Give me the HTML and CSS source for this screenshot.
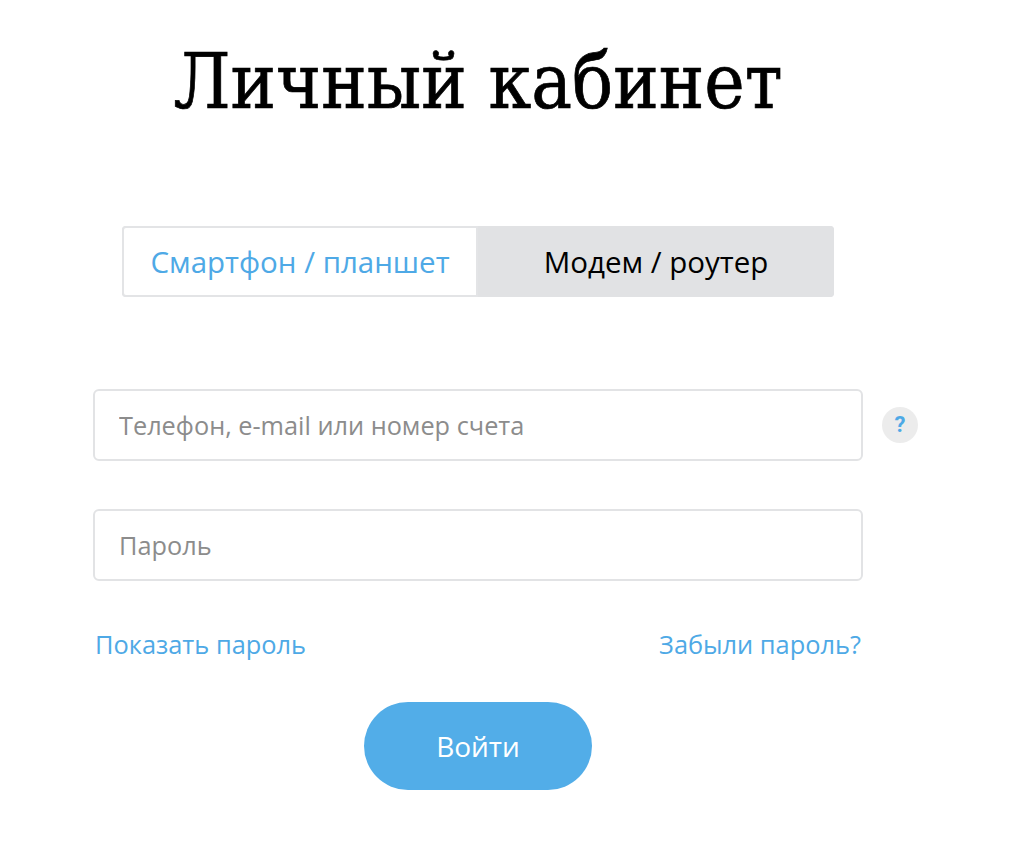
FILE: index.html
```html
<!DOCTYPE html>
<html lang="ru">
<head>
<meta charset="utf-8">
<title>Личный кабинет</title>
<link rel="stylesheet" href="styles.css">
</head>
<body>
<main class="page">
  <h1 class="title">Личный кабинет</h1>
  <div class="tabs">
    <button class="tab tab-active" type="button">Смартфон / планшет</button>
    <button class="tab tab-inactive" type="button">Модем / роутер</button>
  </div>
  <form class="form">
    <div class="field-row">
      <input class="field" type="text" placeholder="Телефон, e-mail или номер счета">
      <span class="help">?</span>
    </div>
    <div class="field-row">
      <input class="field" type="password" placeholder="Пароль">
    </div>
    <div class="links">
      <a class="link" href="#">Показать пароль</a>
      <a class="link" href="#">Забыли пароль?</a>
    </div>
    <div class="submit-row">
      <button class="submit" type="button">Войти</button>
    </div>
  </form>
</main>
</body>
</html>
```
FILE: styles.css
```css
html, body {
  margin: 0;
  padding: 0;
  background: #ffffff;
}
body {
  font-family: "Open Sans", "Noto Sans", sans-serif;
  color: #000;
}
.page {
  width: 770px;
  margin-left: 93px;
  display: flex;
  flex-direction: column;
  align-items: center;
}
.title {
  font-family: "DejaVu Serif Condensed", "DejaVu Serif", serif;
  font-stretch: condensed;
  font-weight: normal;
  font-size: 76px;
  line-height: 86px;
  margin: 39px 0 0 0;
  -webkit-text-stroke: 0.7px #000;
}
.tabs {
  margin-top: 101px;
  display: flex;
  width: 712px;
  height: 71px;
  border-radius: 4px;
  background: #e1e2e4;
}
.tab {
  flex: 1 1 50%;
  font-family: "Open Sans", "Noto Sans", sans-serif;
  font-size: 29.5px;
  border: 0;
  margin: 0;
  padding: 0;
  cursor: pointer;
}
.tab-active {
  background: #fff;
  color: #4ea9e6;
  border: 2px solid #e3e4e6;
  border-radius: 4px 0 0 4px;
}
.tab-inactive {
  background: #e1e2e4;
  color: #000;
  border-radius: 0 4px 4px 0;
}
.form {
  width: 770px;
  margin-top: 92px;
  display: flex;
  flex-direction: column;
}
.field-row {
  position: relative;
  height: 72px;
  margin-bottom: 48px;
}
.field {
  box-sizing: border-box;
  width: 770px;
  height: 72px;
  border: 2px solid #e2e3e5;
  border-radius: 6px;
  padding: 0 24px;
  font-family: "Open Sans", "Noto Sans", sans-serif;
  font-size: 25.3px;
  color: #222;
  outline: none;
}
.field::placeholder {
  color: #8c8c8c;
}
.help {
  position: absolute;
  left: 789px;
  top: 18px;
  width: 36px;
  height: 36px;
  border-radius: 50%;
  background: #ececec;
  color: #4ea9e6;
  font-family: Roboto, "Open Sans", sans-serif;
  font-weight: bold;
  font-size: 22px;
  line-height: 36px;
  text-align: center;
}
.links {
  display: flex;
  justify-content: space-between;
  padding: 0 2px;
  height: 30px;
}
.link {
  font-size: 25.4px;
  line-height: 30px;
  color: #4ea9e6;
  text-decoration: none;
}
.submit-row {
  display: flex;
  justify-content: center;
  margin-top: 43px;
}
.submit {
  width: 228px;
  height: 88px;
  border: 0;
  border-radius: 44px;
  background: #52ade8;
  color: #fff;
  font-family: "Open Sans", "Noto Sans", sans-serif;
  font-size: 28px;
  cursor: pointer;
}
```
